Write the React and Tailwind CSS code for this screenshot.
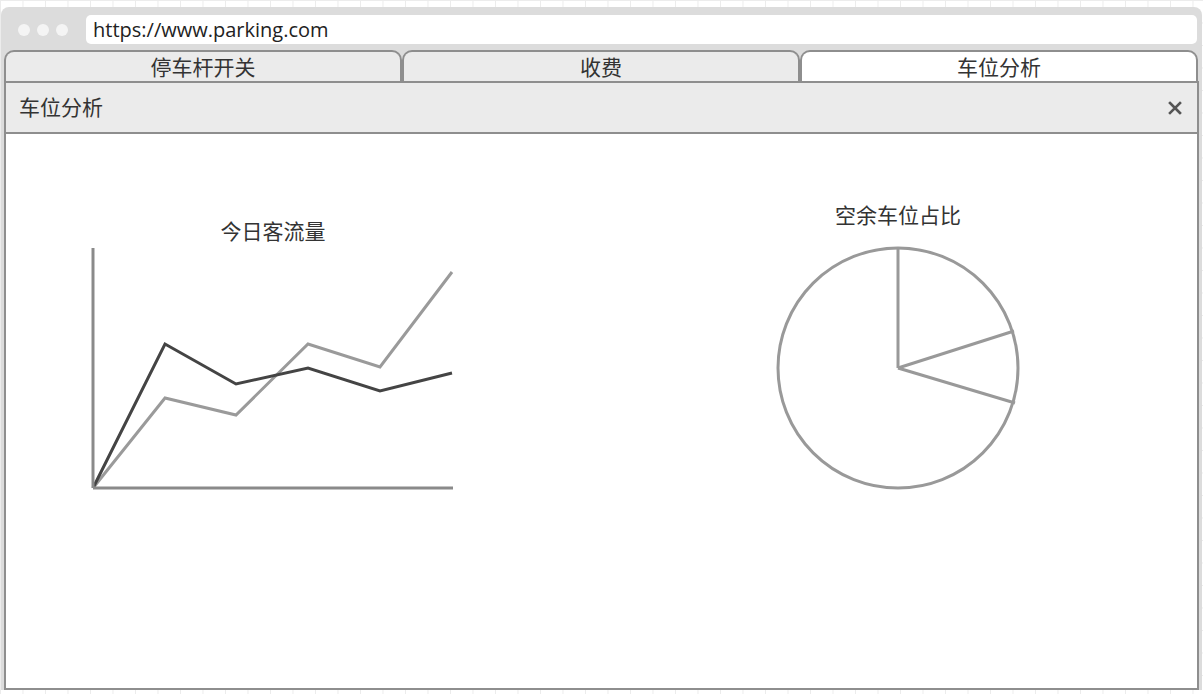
import React from 'react';

const FONT = { fontFamily: '"Segoe UI", "Open Sans", "Noto Sans CJK SC", sans-serif' };

const tabs = [
  { label: '停车杆开关', active: false },
  { label: '收费', active: false },
  { label: '车位分析', active: true },
];

function LineChart() {
  const dark = '93,489 165,345 236,385 308,369 380,392 452,374';
  const light = '93,489 165,399 236,416 308,345 380,368 452,273';
  const shift = (pts) =>
    pts
      .split(' ')
      .map((p) => {
        const [x, y] = p.split(',').map(Number);
        return `${x - 88},${y - 244}`;
      })
      .join(' ');
  return (
    <svg width="370" height="250" viewBox="0 0 370 250" aria-hidden>
      <polyline points={shift(light)} fill="none" stroke="#9a9a9a" strokeWidth="3" />
      <polyline points={shift(dark)} fill="none" stroke="#444" strokeWidth="3" />
      <line x1="5" y1="5" x2="5" y2="245" stroke="#8a8a8a" strokeWidth="3" />
      <line x1="5" y1="245" x2="365" y2="245" stroke="#8a8a8a" strokeWidth="3" />
    </svg>
  );
}

function PieChart() {
  // centre (125,125), radius 120
  return (
    <svg width="250" height="250" viewBox="0 0 250 250" aria-hidden>
      <circle cx="125" cy="125" r="120" fill="none" stroke="#999" strokeWidth="3" />
      <line x1="125" y1="125" x2="125" y2="5" stroke="#999" strokeWidth="3" />
      <line x1="125" y1="125" x2="241" y2="88" stroke="#999" strokeWidth="3" />
      <line x1="125" y1="125" x2="242" y2="160" stroke="#999" strokeWidth="3" />
    </svg>
  );
}

export default function App() {
  return (
    <div
      className="w-[1203px] h-[694px] overflow-hidden bg-white bg-[linear-gradient(to_right,#ececec_1px,transparent_1px),linear-gradient(to_bottom,#ececec_1px,transparent_1px)] bg-[size:22.5px_22.5px] pt-[7px] px-px text-[#333]"
      style={FONT}
    >
      <div className="flex flex-col h-[683px] bg-[#dcdcdc] rounded-t-[8px]">
        {/* address bar */}
        <div className="flex items-center h-[43px] pt-[2px] pl-[17px] pr-[5px]">
          <div className="flex gap-[7px]">
            {[0, 1, 2].map((i) => (
              <span key={i} className="h-[12px] w-[12px] rounded-full bg-[#f4f4f4]" />
            ))}
          </div>
          <div className="ml-[18px] flex h-[29px] flex-1 items-center rounded-[5px] bg-white pl-[7px] text-[20px] leading-none text-[#222]">
            https://www.parking.com
          </div>
        </div>

        {/* tabs */}
        <div className="flex h-[31px] px-[3px] pr-[4px]">
          {tabs.map((t) => (
            <div
              key={t.label}
              className={`flex flex-1 items-center justify-center rounded-t-[10px] border-2 border-b-0 border-[#8e8e8e] text-[21px] leading-none pt-[1px] ${
                t.active ? 'bg-white' : 'bg-[#ebebeb]'
              }`}
            >
              {t.label}
            </div>
          ))}
        </div>

        {/* panel */}
        <div className="mx-[3px] flex flex-1 flex-col border-2 border-[#8e8e8e] bg-white">
          <div className="flex h-[51px] items-center justify-between border-b-2 border-[#8e8e8e] bg-[#ebebeb] pl-[13px] pr-[15px]">
            <span className="text-[21px] leading-none">车位分析</span>
            <svg width="14" height="14" viewBox="0 0 14 14" aria-hidden>
              <path d="M2 2 L12 12 M12 2 L2 12" stroke="#555" strokeWidth="2.6" strokeLinecap="square" />
            </svg>
          </div>
          <div className="flex flex-1 items-start">
            <div className="ml-[82px] flex w-[370px] flex-col items-center pt-[83px]">
              <div className="h-[28px] text-[21px] leading-[28px]">今日客流量</div>
              <div className="mt-[-2px]">
                <LineChart />
              </div>
            </div>
            <div className="ml-[315px] flex w-[250px] flex-col items-center pt-[67px]">
              <div className="h-[28px] text-[21px] leading-[28px]">空余车位占比</div>
              <div className="mt-[14px]">
                <PieChart />
              </div>
            </div>
          </div>
        </div>
      </div>
    </div>
  );
}
